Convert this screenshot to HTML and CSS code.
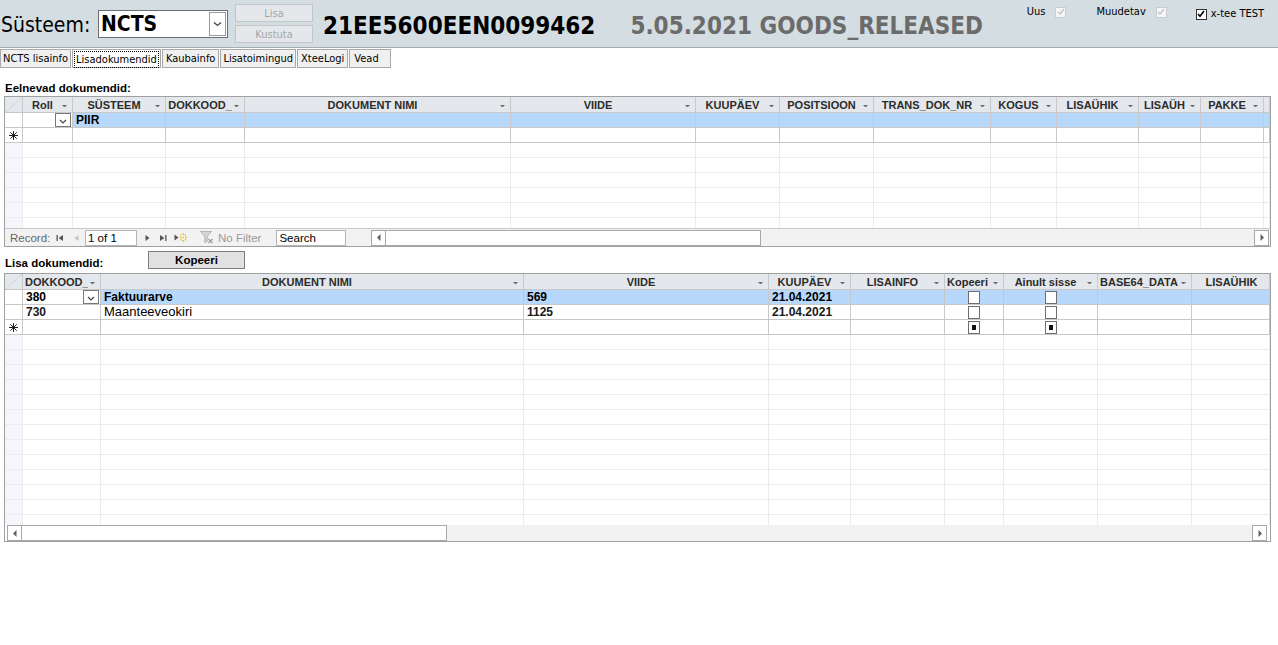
FILE: index.html
```html
<!DOCTYPE html>
<html lang="et">
<head>
<meta charset="utf-8">
<title>NCTS – Lisadokumendid</title>
<link rel="stylesheet" href="styles.css">
</head>
<body>
<div class="app">
  <header class="topbar">
    <div class="sys-label">Süsteem:</div>
    <div class="combo">
      <span class="combo-value">NCTS</span>
      <span class="combo-btn"><svg width="9" height="6" viewBox="0 0 9 6"><path d="M1 1.5 L4.5 4.5 L8 1.5" fill="none" stroke="#444" stroke-width="1.3"/></svg></span>
    </div>
    <div class="btn-col">
      <button class="ghost-btn">Lisa</button>
      <button class="ghost-btn">Kustuta</button>
    </div>
    <div class="doc-id">21EE5600EEN0099462</div>
    <div class="doc-status">5.05.2021 GOODS_RELEASED</div>
    <div class="flags">
      <span class="flag-text">Uus</span>
      <span class="cb cb-off"><svg width="8" height="8" viewBox="0 0 8 8"><path d="M1 4 L3 6 L7 1" fill="none" stroke="#c4c4c4" stroke-width="1.4"/></svg></span>
      <span class="flag-text flag-gap">Muudetav</span>
      <span class="cb cb-off"><svg width="8" height="8" viewBox="0 0 8 8"><path d="M1 4 L3 6 L7 1" fill="none" stroke="#c4c4c4" stroke-width="1.4"/></svg></span>
      <span class="cb cb-on flag-gap2"><svg width="8" height="8" viewBox="0 0 8 8"><path d="M1 4 L3 6.2 L7 1" fill="none" stroke="#000" stroke-width="1.6"/></svg></span>
      <span class="flag-text flag-near">x-tee TEST</span>
    </div>
  </header>

  <nav class="tabs">
    <span class="tab">NCTS lisainfo</span>
    <span class="tab tab-active"><span class="focus">Lisadokumendid</span></span>
    <span class="tab tab-wide">Kaubainfo</span>
    <span class="tab">Lisatoimingud</span>
    <span class="tab tab-wide">XteeLogi</span>
    <span class="tab tab-last">Vead</span>
  </nav>

  <main class="page">
    <div class="sub-title first">Eelnevad dokumendid:</div>
    <div class="grid grid-prev">
      <div class="grid-body">
        <table class="dg">
          <colgroup>
            <col style="width:18px"><col style="width:50px"><col style="width:93px"><col style="width:79px">
            <col style="width:266px"><col style="width:185px"><col style="width:84px"><col style="width:94px">
            <col style="width:117px"><col style="width:66px"><col style="width:82px"><col style="width:62px">
            <col style="width:63px"><col style="width:6px">
          </colgroup>
          <thead>
            <tr>
              <th class="sel-head"></th>
              <th><div class="hd"><span class="hd-t">Roll</span><i class="arr"></i></div></th>
              <th><div class="hd"><span class="hd-t">SÜSTEEM</span><i class="arr"></i></div></th>
              <th><div class="hd"><span class="hd-t">DOKKOOD_</span><i class="arr"></i></div></th>
              <th><div class="hd"><span class="hd-t">DOKUMENT NIMI</span><i class="arr"></i></div></th>
              <th><div class="hd"><span class="hd-t">VIIDE</span><i class="arr"></i></div></th>
              <th><div class="hd"><span class="hd-t">KUUPÄEV</span><i class="arr"></i></div></th>
              <th><div class="hd"><span class="hd-t">POSITSIOON</span><i class="arr"></i></div></th>
              <th><div class="hd"><span class="hd-t">TRANS_DOK_NR</span><i class="arr"></i></div></th>
              <th><div class="hd"><span class="hd-t">KOGUS</span><i class="arr"></i></div></th>
              <th><div class="hd"><span class="hd-t">LISAÜHIK</span><i class="arr"></i></div></th>
              <th><div class="hd"><span class="hd-t">LISAÜH</span><i class="arr"></i></div></th>
              <th><div class="hd"><span class="hd-t">PAKKE</span><i class="arr"></i></div></th>
              <th></th>
            </tr>
          </thead>
          <tbody>
            <tr class="row cur">
              <td class="sel"></td>
              <td class="edit"><div class="cell-combo"><span></span><span class="mini-btn"><svg width="8" height="5" viewBox="0 0 8 5"><path d="M1 1 L4 4 L7 1" fill="none" stroke="#444" stroke-width="1.2"/></svg></span></div></td>
              <td class="b">PIIR</td><td></td><td></td><td></td><td></td><td></td><td></td><td></td><td></td><td></td><td></td><td></td>
            </tr>
            <tr class="row">
              <td class="sel"><svg class="star" width="9" height="9" viewBox="0 0 9 9"><path d="M4.5 0 V9 M0 4.5 H9 M1.3 1.3 L7.7 7.7 M7.7 1.3 L1.3 7.7" stroke="#222" stroke-width="1"/></svg></td>
              <td></td><td></td><td></td><td></td><td></td><td></td><td></td><td></td><td></td><td></td><td></td><td></td><td></td>
            </tr>
            <tr class="blank"><td class="sel"></td><td></td><td></td><td></td><td></td><td></td><td></td><td></td><td></td><td></td><td></td><td></td><td></td><td></td></tr>
            <tr class="blank"><td class="sel"></td><td></td><td></td><td></td><td></td><td></td><td></td><td></td><td></td><td></td><td></td><td></td><td></td><td></td></tr>
            <tr class="blank"><td class="sel"></td><td></td><td></td><td></td><td></td><td></td><td></td><td></td><td></td><td></td><td></td><td></td><td></td><td></td></tr>
            <tr class="blank"><td class="sel"></td><td></td><td></td><td></td><td></td><td></td><td></td><td></td><td></td><td></td><td></td><td></td><td></td><td></td></tr>
            <tr class="blank"><td class="sel"></td><td></td><td></td><td></td><td></td><td></td><td></td><td></td><td></td><td></td><td></td><td></td><td></td><td></td></tr>
            <tr class="blank"><td class="sel"></td><td></td><td></td><td></td><td></td><td></td><td></td><td></td><td></td><td></td><td></td><td></td><td></td><td></td></tr>
          </tbody>
        </table>
      </div>
      <div class="navbar">
        <span class="nav-label">Record:</span>
        <span class="nav-ic ic-first"><svg width="8" height="8" viewBox="0 0 8 8"><rect x="0.5" y="1" width="1.3" height="6" fill="#555"/><path d="M7 1 V7 L2.6 4 Z" fill="#555"/></svg></span>
        <span class="nav-ic ic-prev"><svg width="5" height="8" viewBox="0 0 5 8"><path d="M4.5 1 V7 L0.5 4 Z" fill="#c2c2c2"/></svg></span>
        <span class="nav-pos">1 of 1</span>
        <span class="nav-ic ic-next"><svg width="5" height="8" viewBox="0 0 5 8"><path d="M0.5 1 V7 L4.5 4 Z" fill="#555"/></svg></span>
        <span class="nav-ic ic-last"><svg width="8" height="8" viewBox="0 0 8 8"><path d="M1 1 V7 L5.4 4 Z" fill="#555"/><rect x="6.2" y="1" width="1.3" height="6" fill="#555"/></svg></span>
        <span class="nav-ic ic-new"><svg width="14" height="9" viewBox="0 0 14 9"><path d="M0.5 1.5 V7.5 L4.5 4.5 Z" fill="#555"/><g fill="#e2b400"><rect x="8.5" y="0.5" width="1.4" height="1.4"/><rect x="8.5" y="3.8" width="1.4" height="1.4"/><rect x="8.5" y="7" width="1.4" height="1.4"/><rect x="5.8" y="3.8" width="1.4" height="1.4"/><rect x="11.2" y="3.8" width="1.4" height="1.4"/><rect x="6.4" y="1.4" width="1.2" height="1.2"/><rect x="10.8" y="1.4" width="1.2" height="1.2"/><rect x="6.4" y="6.2" width="1.2" height="1.2"/><rect x="10.8" y="6.2" width="1.2" height="1.2"/></g></svg></span>
        <span class="nav-filter"><svg width="14" height="13" viewBox="0 0 14 13"><path d="M0.5 0.5 H11.5 L7.2 5.5 V10.5 L4.8 11.5 V5.5 Z" fill="#d4d4d4" stroke="#a8a8a8" stroke-width="0.8"/><path d="M8.5 8 L12.5 12 M12.5 8 L8.5 12" stroke="#9a9a9a" stroke-width="1.2"/></svg><span class="nf-text">No Filter</span></span>
        <span class="nav-search">Search</span>
        <div class="hscroll nav-scroll">
          <span class="sb-arrow"><svg width="4" height="7" viewBox="0 0 4 7"><path d="M3.5 0 V7 L0 3.5 Z" fill="#606060"/></svg></span>
          <span class="sb-thumb thumb-a"></span>
          <span class="sb-track"></span>
          <span class="sb-arrow"><svg width="4" height="7" viewBox="0 0 4 7"><path d="M0.5 0 V7 L4 3.5 Z" fill="#606060"/></svg></span>
        </div>
      </div>
    </div>

    <div class="sub-row">
      <div class="sub-title">Lisa dokumendid:</div>
      <button class="copy-btn">Kopeeri</button>
    </div>
    <div class="grid grid-add">
      <div class="grid-body">
        <table class="dg">
          <colgroup>
            <col style="width:18px"><col style="width:78px"><col style="width:423px"><col style="width:245px">
            <col style="width:82px"><col style="width:94px"><col style="width:59px"><col style="width:94px">
            <col style="width:94px"><col style="width:78px">
          </colgroup>
          <thead>
            <tr>
              <th class="sel-head"></th>
              <th><div class="hd"><span class="hd-t left">DOKKOOD_</span><i class="arr"></i></div></th>
              <th><div class="hd"><span class="hd-t">DOKUMENT NIMI</span><i class="arr"></i></div></th>
              <th><div class="hd"><span class="hd-t">VIIDE</span><i class="arr"></i></div></th>
              <th><div class="hd"><span class="hd-t">KUUPÄEV</span><i class="arr"></i></div></th>
              <th><div class="hd"><span class="hd-t">LISAINFO</span><i class="arr"></i></div></th>
              <th><div class="hd"><span class="hd-t left">Kopeeri</span><i class="arr"></i></div></th>
              <th><div class="hd"><span class="hd-t">Ainult sisse</span><i class="arr"></i></div></th>
              <th><div class="hd"><span class="hd-t left">BASE64_DATA</span><i class="arr"></i></div></th>
              <th><div class="hd"><span class="hd-t">LISAÜHIK</span></div></th>
            </tr>
          </thead>
          <tbody>
            <tr class="row cur">
              <td class="sel"></td>
              <td class="edit b"><div class="cell-combo"><span>380</span><span class="mini-btn"><svg width="8" height="5" viewBox="0 0 8 5"><path d="M1 1 L4 4 L7 1" fill="none" stroke="#444" stroke-width="1.2"/></svg></span></div></td>
              <td class="b">Faktuurarve</td><td class="b">569</td><td class="b">21.04.2021</td><td></td>
              <td class="chk"><span class="box"></span></td><td class="chk"><span class="box"></span></td><td></td><td></td>
            </tr>
            <tr class="row">
              <td class="sel"></td>
              <td class="m">730</td><td>Maanteeveokiri</td><td class="m">1125</td><td class="m">21.04.2021</td><td></td>
              <td class="chk"><span class="box"></span></td><td class="chk"><span class="box"></span></td><td></td><td></td>
            </tr>
            <tr class="row">
              <td class="sel"><svg class="star" width="9" height="9" viewBox="0 0 9 9"><path d="M4.5 0 V9 M0 4.5 H9 M1.3 1.3 L7.7 7.7 M7.7 1.3 L1.3 7.7" stroke="#222" stroke-width="1"/></svg></td>
              <td></td><td></td><td></td><td></td><td></td>
              <td class="chk"><span class="box mixed"></span></td><td class="chk"><span class="box mixed"></span></td><td></td><td></td>
            </tr>
            <tr class="blank"><td class="sel"></td><td></td><td></td><td></td><td></td><td></td><td></td><td></td><td></td><td></td></tr>
            <tr class="blank"><td class="sel"></td><td></td><td></td><td></td><td></td><td></td><td></td><td></td><td></td><td></td></tr>
            <tr class="blank"><td class="sel"></td><td></td><td></td><td></td><td></td><td></td><td></td><td></td><td></td><td></td></tr>
            <tr class="blank"><td class="sel"></td><td></td><td></td><td></td><td></td><td></td><td></td><td></td><td></td><td></td></tr>
            <tr class="blank"><td class="sel"></td><td></td><td></td><td></td><td></td><td></td><td></td><td></td><td></td><td></td></tr>
            <tr class="blank"><td class="sel"></td><td></td><td></td><td></td><td></td><td></td><td></td><td></td><td></td><td></td></tr>
            <tr class="blank"><td class="sel"></td><td></td><td></td><td></td><td></td><td></td><td></td><td></td><td></td><td></td></tr>
            <tr class="blank"><td class="sel"></td><td></td><td></td><td></td><td></td><td></td><td></td><td></td><td></td><td></td></tr>
            <tr class="blank"><td class="sel"></td><td></td><td></td><td></td><td></td><td></td><td></td><td></td><td></td><td></td></tr>
            <tr class="blank"><td class="sel"></td><td></td><td></td><td></td><td></td><td></td><td></td><td></td><td></td><td></td></tr>
            <tr class="blank"><td class="sel"></td><td></td><td></td><td></td><td></td><td></td><td></td><td></td><td></td><td></td></tr>
            <tr class="blank"><td class="sel"></td><td></td><td></td><td></td><td></td><td></td><td></td><td></td><td></td><td></td></tr>
            <tr class="blank"><td class="sel"></td><td></td><td></td><td></td><td></td><td></td><td></td><td></td><td></td><td></td></tr>
          </tbody>
        </table>
      </div>
      <div class="hscroll grid-scroll">
        <span class="sb-arrow"><svg width="4" height="7" viewBox="0 0 4 7"><path d="M3.5 0 V7 L0 3.5 Z" fill="#606060"/></svg></span>
        <span class="sb-thumb thumb-b"></span>
        <span class="sb-track"></span>
        <span class="sb-arrow"><svg width="4" height="7" viewBox="0 0 4 7"><path d="M0.5 0 V7 L4 3.5 Z" fill="#606060"/></svg></span>
      </div>
    </div>
  </main>
</div>
</body>
</html>
```

FILE: styles.css
```css
* { box-sizing: border-box; }

body {
  margin: 0;
  background: #fff;
  color: #000;
  font-family: "DejaVu Sans Condensed", "DejaVu Sans", sans-serif;
  font-size: 11px;
}

/* ---------- top bar ---------- */
.topbar {
  height: 47px;
  background: #d3dde2;
  display: flex;
  align-items: center;
}

.sys-label {
  width: 98px;
  padding-left: 1px;
  font-size: 21px;
  line-height: 26px;
  margin-top: 2px;
}

.combo {
  width: 130px;
  height: 28px;
  margin-top: 1px;
  background: #fff;
  border: 1px solid #6f6f6f;
  display: flex;
  align-items: center;
  padding: 0 1px 0 2px;
}
.combo-value {
  flex: 1;
  font-weight: bold;
  font-size: 21px;
  line-height: 26px;
}
.combo-btn {
  width: 17px;
  height: 24px;
  border: 1px solid #9a9a9a;
  display: flex;
  align-items: center;
  justify-content: center;
}

.btn-col {
  align-self: flex-start;
  margin-left: 7px;
  padding-top: 4px;
  display: flex;
  flex-direction: column;
  gap: 3px;
  width: 78px;
}
.ghost-btn {
  height: 18px;
  margin: 0;
  padding: 0;
  border: 1px solid #c3c6c8;
  background: #e4e8ea;
  color: #a6a6a6;
  font: 11px "DejaVu Sans Condensed", "DejaVu Sans", sans-serif;
}

.doc-id {
  margin-left: 10px;
  font-weight: bold;
  font-size: 24px;
  margin-top: 4px;
}
.doc-status {
  margin-left: 35px;
  font-weight: bold;
  font-size: 24px;
  color: #6b6b6b;
  margin-top: 4px;
}

.flags {
  margin-left: auto;
  align-self: flex-start;
  display: flex;
  align-items: center;
  padding: 4px 14px 0 0;
  font-size: 11px;
}
.flag-text { line-height: 12px; }
.cb {
  width: 11px;
  height: 11px;
  margin-left: 10px;
  display: flex;
  align-items: center;
  justify-content: center;
  background: #fff;
}
.cb-off { border: 1px solid #c9cdd0; background: #f4f6f7; }
.cb-on { border: 1px solid #333; margin-top: 4px; }
.flag-gap { margin-left: 30px; }
.flag-gap2 { margin-left: 29px; }
.flag-near { margin-left: 4px; margin-top: 4px; }

/* ---------- tabs ---------- */
.tabs {
  display: flex;
  gap: 1px;
  height: 21px;
  border-top: 1px solid #a3adb2;
  padding-top: 1px;
  background: #fff;
}
.tab {
  height: 19px;
  border: 1px solid #a9a9a9;
  background: #f0f0f0;
  padding: 0 2px;
  line-height: 17px;
  font-size: 11px;
  white-space: nowrap;
}
.tab-wide { padding: 0 3px; }
.tab-active { background: #fff; padding: 1px 1px; line-height: 15px; }
.tab-last { padding-right: 11px; padding-left: 4px; }
.focus { display: block; border: 1px dotted #000; padding: 0 1px; }

/* ---------- page ---------- */
.page { padding: 0 6px 0 4px; }

.sub-title {
  font-family: "Liberation Sans", Arial, sans-serif;
  font-weight: bold;
  font-size: 11.5px;
  padding-left: 1px;
  line-height: 15px;
}
.sub-title.first { margin-top: 12px; height: 16px; padding-top: 1px; }

.sub-row {
  display: flex;
  align-items: flex-end;
  margin-top: 4px;
  height: 18px;
  margin-bottom: 4px;
}
.sub-row .sub-title { width: 144px; line-height: 14px; margin-bottom: -1px; }
.copy-btn {
  width: 97px;
  height: 18px;
  margin: 0;
  padding: 0;
  border: 1px solid #7d7d7d;
  background: #e1e1e1;
  font: bold 11.5px "Liberation Sans", Arial, sans-serif;
  color: #000;
  align-self: flex-start;
}

/* ---------- datasheet grids ---------- */
.grid {
  width: 1267px;
  border: 1px solid #a0a0a0;
  background: #fff;
}
.grid-body { overflow: hidden; }
.grid-prev .grid-body { height: 131px; }
.grid-add .grid-body { height: 251px; }

.dg {
  table-layout: fixed;
  border-collapse: separate;
  border-spacing: 0;
  width: 1265px;
  font-family: "Liberation Sans", Arial, sans-serif;
}
.dg th, .dg td {
  padding: 0 0 0 3px;
  height: 15px;
  border-right: 1px solid #c8c8c8;
  border-bottom: 1px solid #c8c8c8;
  white-space: nowrap;
  overflow: hidden;
  font-size: 13px;
  line-height: 14px;
  text-align: left;
}
.dg th {
  height: 16px;
  background: #e4e7eb;
  font-weight: bold;
  font-size: 11px;
  color: #2c2c2c;
  padding: 0 0 0 2px;
}
.hd { display: flex; align-items: center; height: 14px; }
.hd-t { flex: 1; text-align: center; overflow: hidden; }
.hd-t.left { text-align: left; }
.arr {
  width: 5px;
  height: 2px;
  margin: 2px 5px 0 2px;
  flex: none;
  border-left: 2.5px solid transparent;
  border-right: 2.5px solid transparent;
  border-top: 2px solid #6a6a6a;
}
.sel-head {
  background: linear-gradient(to bottom right, #e4e7eb 0 49%, #d2d5d9 50%, #e4e7eb 56%) !important;
}

.row td { background: #fff; }
.row.cur td { background: #b8d8fb; }
.row.cur td.edit { background: #fff; }
.row td.sel { background: #fff; padding: 0; text-align: center; }
.row.cur td.sel { background: #fff; }
.dg td.b { font-weight: bold; font-size: 12px; }
.dg td.m { font-weight: bold; font-size: 12px; color: #1a1a1a; }
.star { display: block; margin: 0 auto; }

.cell-combo { display: flex; align-items: center; height: 14px; }
.cell-combo > span:first-child { flex: 1; }
.mini-btn {
  width: 16px;
  height: 14px;
  border: 1px solid #7a7a7a;
  margin-right: 1px;
  display: flex;
  align-items: flex-end;
  justify-content: center;
  padding-bottom: 2px;
  background: #fff;
}

.dg td.chk { text-align: center; padding: 0; }
.box {
  display: inline-flex;
  align-items: center;
  justify-content: center;
  width: 12px;
  height: 13px;
  margin-top: 1px;
  border: 1px solid #6e6e6e;
  background: #fff;
  vertical-align: top;
}
.box.mixed::after {
  content: "";
  width: 4px;
  height: 5px;
  background: #111;
}

.blank td {
  border-right-color: #ececec;
  border-bottom-color: #ececec;
  background: #fff;
}
.blank td.sel { background: #f4f6fc; }

/* ---------- record navigator ---------- */
.navbar {
  height: 18px;
  border-top: 1px solid #c9c9c9;
  background: #f2f2f2;
  display: flex;
  align-items: center;
  padding-left: 5px;
  font-family: "Liberation Sans", Arial, sans-serif;
  font-size: 11.5px;
  color: #666;
}
.nav-label { width: 46px; }
.nav-ic { display: flex; align-items: center; }
.ic-prev { margin-left: 10px; }
.nav-pos {
  margin-left: 6px;
  width: 52px;
  height: 16px;
  border: 1px solid #b5b5b5;
  background: #fff;
  color: #000;
  padding-left: 2px;
  line-height: 14px;
}
.ic-next { margin-left: 8px; }
.ic-last { margin-left: 9px; }
.ic-new { margin-left: 7px; }
.nav-filter { margin-left: 12px; display: flex; align-items: center; color: #9a9a9a; }
.nf-text { margin-left: 4px; }
.nav-search {
  margin-left: 15px;
  width: 70px;
  height: 16px;
  border: 1px solid #b5b5b5;
  background: #fff;
  color: #000;
  padding-left: 2px;
  line-height: 14px;
}
.nav-scroll { margin-left: 25px; flex: 1; margin-right: 1px; }

/* ---------- horizontal scrollbars ---------- */
.hscroll {
  display: flex;
  height: 16px;
  background: #f2f2f2;
}
.sb-arrow {
  width: 15px;
  height: 16px;
  border: 1px solid #a8a8a8;
  background: #fff;
  display: flex;
  align-items: center;
  justify-content: center;
}
.sb-thumb {
  height: 16px;
  border: 1px solid #a8a8a8;
  border-left: none;
  background: #fff;
}
.thumb-a { width: 375px; }
.thumb-b { width: 425px; }
.sb-track { flex: 1; }
.grid-scroll { margin: 0 3px 0 2px; }
```
